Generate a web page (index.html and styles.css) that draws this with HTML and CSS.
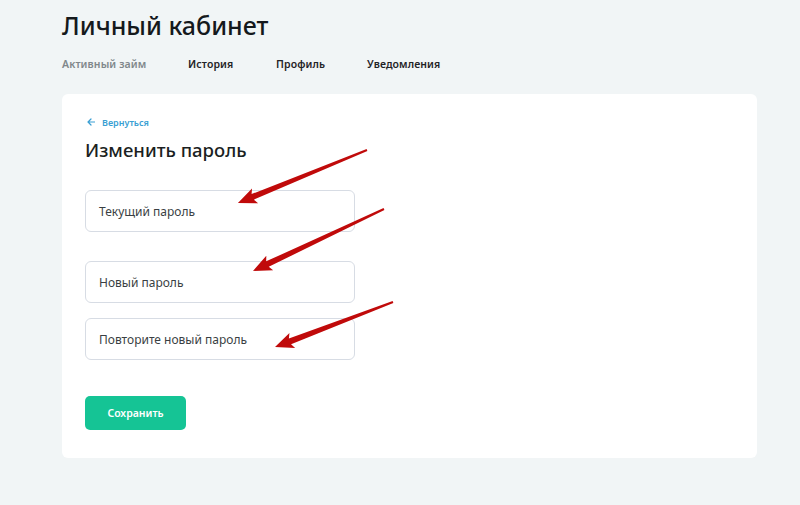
FILE: index.html
```
<!DOCTYPE html>
<html lang="ru">
<head>
<meta charset="utf-8">
<title>Личный кабинет</title>
<link rel="stylesheet" href="styles.css">
</head>
<body>
<div class="page">
  <h1 class="title">Личный кабинет</h1>
  <nav class="tabs">
    <a class="tab tab-muted">Активный займ</a>
    <a class="tab tab-hist">История</a>
    <a class="tab tab-prof">Профиль</a>
    <a class="tab">Уведомления</a>
  </nav>
  <section class="card">
    <a class="back"><svg class="back-arrow" width="8" height="8" viewBox="0 0 8 8"><path d="M7.5 4H1M4 1L1 4l3 3" fill="none" stroke="#3a9fd3" stroke-width="1.2" stroke-linecap="round" stroke-linejoin="round"/></svg>Вернуться</a>
    <h2 class="card-title">Изменить пароль</h2>
    <div class="field field-first">Текущий пароль</div>
    <div class="field field-second">Новый пароль</div>
    <div class="field field-third">Повторите новый пароль</div>
    <button class="btn">Сохранить</button>
  </section>
</div>
<svg class="annot" width="800" height="505" viewBox="0 0 800 505">
  <g fill="#c00a0a">
    <polygon transform="translate(367 150) rotate(157.7)" points="0,-1 123.5,-3 121,-8 139.5,0 121,8 123.5,3 0,1"/>
    <polygon transform="translate(384 209) rotate(154.7)" points="0,-1 128.9,-3 126.4,-8 144.9,0 126.4,8 128.9,3 0,1"/>
    <polygon transform="translate(393 302) rotate(159.1)" points="0,-1 110.3,-3 107.8,-8 126.3,0 107.8,8 110.3,3 0,1"/>
  </g>
</svg>
</body>
</html>
```
FILE: styles.css
```
html, body {
  margin: 0;
  padding: 0;
}
body {
  background: #f1f5f6;
  font-family: "Noto Sans", "Open Sans", sans-serif;
  color: #1b1f22;
  width: 800px;
  height: 505px;
  overflow: hidden;
  position: relative;
}
.page {
  padding: 0 43px 0 62px;
}
.title {
  margin: 0;
  padding-top: 7px;
  font-size: 25px;
  line-height: 36px;
  font-weight: 500;
  letter-spacing: 0;
  color: #15191c;
}
.tabs {
  display: flex;
  margin-top: 12px;
  height: 18px;
  align-items: center;
}
.tab {
  font-size: 10.5px;
  font-weight: 600;
  color: #1f2326;
  letter-spacing: 0.1px;
}
.tab-muted {
  color: #80878b;
  width: 126px;
}
.tab-hist {
  width: 88px;
}
.tab-prof {
  width: 91px;
}
.card {
  margin-top: 21px;
  background: #ffffff;
  border-radius: 6px;
  height: 364px;
  box-sizing: border-box;
  padding: 22px 23px 0 23px;
  display: flex;
  flex-direction: column;
  align-items: flex-start;
}
.back {
  display: flex;
  align-items: center;
  font-size: 9px;
  font-weight: 600;
  color: #3a9fd3;
  height: 12px;
}
.back-arrow {
  margin-left: 2px;
  margin-right: 7px;
}
.card-title {
  margin: 9px 0 0 0;
  font-size: 18.5px;
  line-height: 26px;
  font-weight: 500;
  color: #1b1f22;
}
.field {
  box-sizing: border-box;
  width: 270px;
  height: 42px;
  border: 1px solid #d7dce4;
  border-radius: 6px;
  display: flex;
  align-items: center;
  padding-left: 13px;
  font-size: 12px;
  color: #3a3f43;
}
.field-first {
  margin-top: 27px;
}
.field-second {
  margin-top: 29px;
}
.field-third {
  margin-top: 15px;
}
.btn {
  margin-top: 36px;
  width: 101px;
  height: 34px;
  border: none;
  border-radius: 5px;
  background: #15c495;
  color: #ffffff;
  font-family: inherit;
  font-size: 10.5px;
  font-weight: 600;
  padding: 0;
}
.annot {
  position: absolute;
  left: 0;
  top: 0;
  pointer-events: none;
}
```
